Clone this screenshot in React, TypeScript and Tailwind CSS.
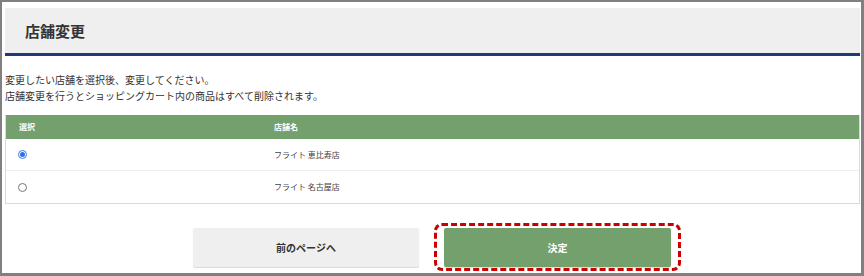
import React from "react";

const font = { fontFamily: '"Noto Sans CJK JP", "Noto Sans", sans-serif' };

function Radio({ checked }: { checked?: boolean }) {
  return checked ? (
    <span className="flex h-[9px] w-[9px] items-center justify-center rounded-full border border-[#3b78e7] bg-white">
      <span className="h-[5px] w-[5px] rounded-full bg-[#2f6de0]" />
    </span>
  ) : (
    <span className="block h-[9px] w-[9px] rounded-full border border-[#777] bg-white" />
  );
}

export default function App() {
  const rows = [
    { name: "フライト 恵比寿店", checked: true },
    { name: "フライト 名古屋店", checked: false },
  ];
  return (
    <div
      style={font}
      className="box-border h-[276px] w-[864px] overflow-hidden border-b-[3px] border-l-2 border-r-[3px] border-t-2 border-[#808080] bg-white text-[#333]"
    >
      <div className="flex flex-col pl-[3px] pt-[6px]">
        <div className="flex h-[48px] w-[855px] items-center border-b-[3px] border-[#1e3a78] bg-[#efefef] pl-[20px]">
          <h1 className="text-[15px] font-bold leading-none text-[#333]">店舗変更</h1>
        </div>
        <div className="mt-[16px] text-[10px] leading-[16px] text-[#333]">
          <p>変更したい店舗を選択後、変更してください。</p>
          <p>店舗変更を行うとショッピングカート内の商品はすべて削除されます。</p>
        </div>
        <div className="mt-[11px] w-[855px] border border-t-0 border-[#cfe0d7]">
          <div className="flex h-[24px] items-center bg-[#74a06e] text-[8px] font-bold text-white">
            <div className="w-[268px] pl-[13px]">選択</div>
            <div>店舗名</div>
          </div>
          {rows.map((r, i) => (
            <div
              key={r.name}
              className={`flex h-[32px] items-center text-[8px] text-[#444] ${i === 0 ? "border-b border-[#eeeeee] bg-white" : "bg-white"}`}
            >
              <div className="w-[268px] pl-[12px]">
                <Radio checked={r.checked} />
              </div>
              <div>{r.name}</div>
            </div>
          ))}
        </div>
        <div className="mt-[24px] flex w-[855px] justify-center gap-[25px] pr-[1px]">
          <button className="h-[39px] w-[226px] rounded-[2px] bg-[#efefef] text-[10px] font-bold text-[#333] shadow-[0_1px_1px_rgba(0,0,0,0.15)]">
            前のページへ
          </button>
          <div className="relative">
            <button className="h-[39px] w-[227px] rounded-[2px] bg-[#74a06e] text-[10px] font-bold text-white shadow-[0_1px_1px_rgba(0,0,0,0.15)]">
              決定
            </button>
            <div className="pointer-events-none absolute -bottom-[4px] -left-[10px] -right-[10px] -top-[5px] rounded-[8px] border-[3px] border-dashed border-[#cc0000]" />
          </div>
        </div>
      </div>
    </div>
  );
}
